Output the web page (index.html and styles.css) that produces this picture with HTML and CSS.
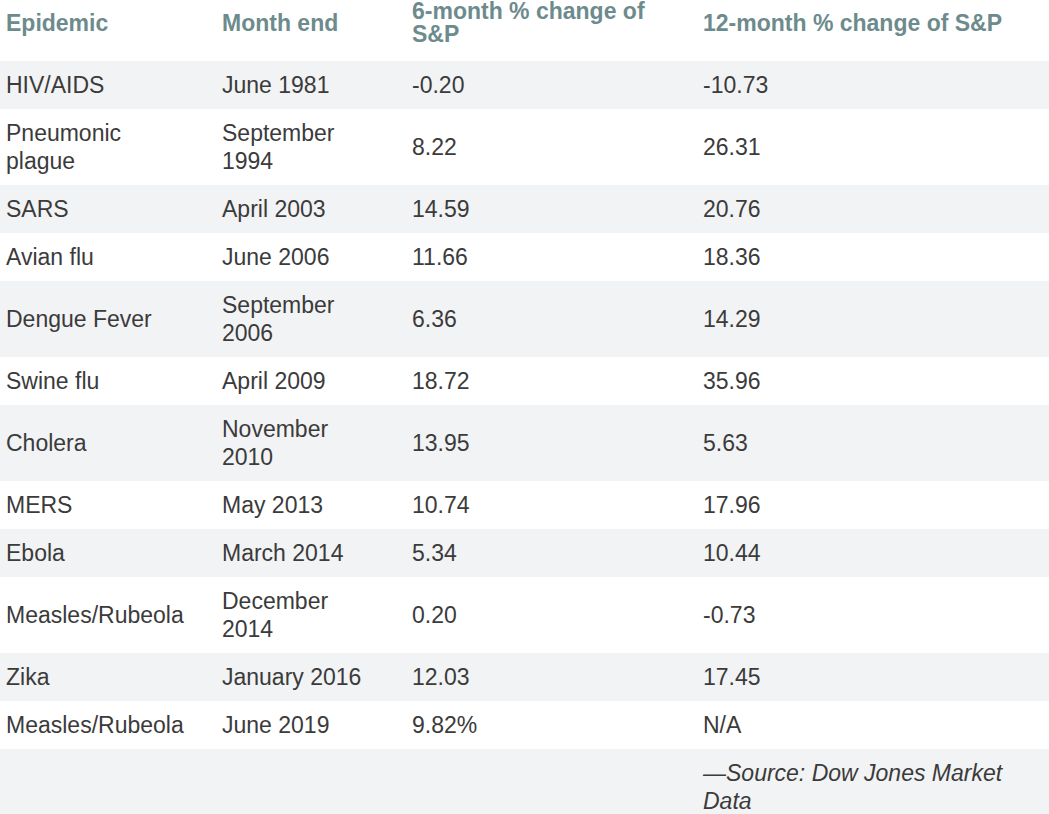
FILE: index.html
```html
<!DOCTYPE html>
<html>
<head>
<meta charset="utf-8">
<link rel="stylesheet" href="styles.css">
</head>
<body>
<table class="data">
  <colgroup>
    <col class="c1"><col class="c2"><col class="c3"><col class="c4">
  </colgroup>
  <thead>
    <tr><th>Epidemic</th><th>Month end</th><th>6-month % change of S&amp;P</th><th>12-month % change of S&amp;P</th></tr>
  </thead>
  <tbody>
    <tr><td>HIV/AIDS</td><td>June 1981</td><td>-0.20</td><td>-10.73</td></tr>
    <tr><td>Pneumonic plague</td><td>September 1994</td><td>8.22</td><td>26.31</td></tr>
    <tr><td>SARS</td><td>April 2003</td><td>14.59</td><td>20.76</td></tr>
    <tr><td>Avian flu</td><td>June 2006</td><td>11.66</td><td>18.36</td></tr>
    <tr><td>Dengue Fever</td><td>September 2006</td><td>6.36</td><td>14.29</td></tr>
    <tr><td>Swine flu</td><td>April 2009</td><td>18.72</td><td>35.96</td></tr>
    <tr><td>Cholera</td><td>November 2010</td><td>13.95</td><td>5.63</td></tr>
    <tr><td>MERS</td><td>May 2013</td><td>10.74</td><td>17.96</td></tr>
    <tr><td>Ebola</td><td>March 2014</td><td>5.34</td><td>10.44</td></tr>
    <tr><td>Measles/Rubeola</td><td>December 2014</td><td>0.20</td><td>-0.73</td></tr>
    <tr><td>Zika</td><td>January 2016</td><td>12.03</td><td>17.45</td></tr>
    <tr><td>Measles/Rubeola</td><td>June 2019</td><td>9.82%</td><td>N/A</td></tr>
    <tr><td></td><td></td><td></td><td class="source">—Source: Dow Jones Market Data</td></tr>
  </tbody>
</table>
</body>
</html>
```

FILE: styles.css
```css
html, body {
  margin: 0;
  padding: 0;
  background: #ffffff;
}
body {
  font-family: "Liberation Sans", Arial, sans-serif;
  overflow: hidden;
}
.data {
  width: 1049px;
  border-collapse: collapse;
  table-layout: fixed;
}
.c1 { width: 216px; }
.c2 { width: 190px; }
.c3 { width: 291px; }
.c4 { width: 352px; }
.data th {
  text-align: left;
  vertical-align: middle;
  font-weight: bold;
  font-size: 23px;
  line-height: 23px;
  color: #6d8b8d;
  padding: 0 24px 15px 6px;
  height: 46px;
}
.data td {
  vertical-align: middle;
  font-size: 23px;
  line-height: 28px;
  color: #3b3b3b;
  padding: 10px 24px 10px 6px;
}
.data tbody tr:nth-child(odd) {
  background: #f2f3f4;
}
.data td.source {
  font-style: italic;
}
```
